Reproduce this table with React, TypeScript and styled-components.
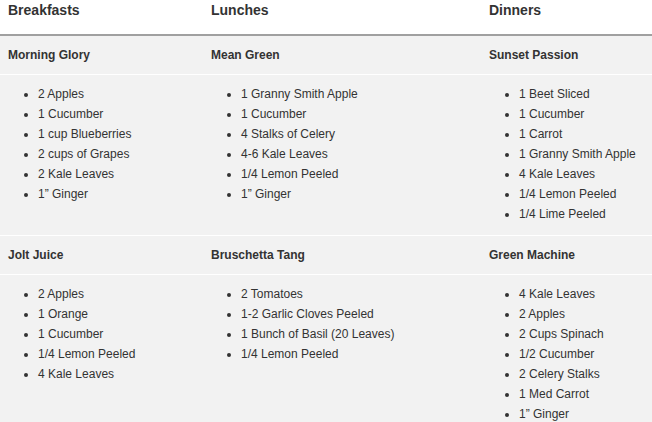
import React from "react";
import styled, { createGlobalStyle } from "styled-components";

const Global = createGlobalStyle`
  html, body { margin: 0; padding: 0; background: #ffffff; }
  body { font-family: "Liberation Sans", Arial, sans-serif; color: #333333; overflow: hidden; }
`;

const Table = styled.table`
  width: 652px;
  border-collapse: collapse;
  table-layout: fixed;
  font-family: "Liberation Sans", Arial, sans-serif;
`;

const HeadCell = styled.th`
  text-align: left;
  vertical-align: top;
  font-size: 14px;
  font-weight: bold;
  line-height: 20px;
  color: #333333;
  padding: 0 8px 14px;
  border-bottom: 2px solid #a0a0a0;
  background: #ffffff;
`;

const Row = styled.tr<{ $divider?: boolean }>`
  background: #f2f2f2;
  border-top: ${(p) => (p.$divider ? "1px solid #ffffff" : "none")};
`;

const NameCell = styled.td`
  font-size: 12px;
  font-weight: bold;
  line-height: 18px;
  color: #333333;
  padding: 10px 8px;
  vertical-align: top;
`;

const ListCell = styled.td`
  padding: 9px 8px 11px;
  vertical-align: top;
`;

const IngredientList = styled.ul`
  margin: 0;
  padding: 0 0 0 30px;
  list-style: disc;
`;

const Item = styled.li`
  font-size: 12px;
  line-height: 20px;
  color: #333333;
`;

type Recipe = { name: string; items: string[] };

const rows: Recipe[][] = [
  [
    { name: "Morning Glory", items: ["2 Apples", "1 Cucumber", "1 cup Blueberries", "2 cups of Grapes", "2 Kale Leaves", "1” Ginger"] },
    { name: "Mean Green", items: ["1 Granny Smith Apple", "1 Cucumber", "4 Stalks of Celery", "4-6 Kale Leaves", "1/4 Lemon Peeled", "1” Ginger"] },
    { name: "Sunset Passion", items: ["1 Beet Sliced", "1 Cucumber", "1 Carrot", "1 Granny Smith Apple", "4 Kale Leaves", "1/4 Lemon Peeled", "1/4 Lime Peeled"] },
  ],
  [
    { name: "Jolt Juice", items: ["2 Apples", "1 Orange", "1 Cucumber", "1/4 Lemon Peeled", "4 Kale Leaves"] },
    { name: "Bruschetta Tang", items: ["2 Tomatoes", "1-2 Garlic Cloves Peeled", "1 Bunch of Basil (20 Leaves)", "1/4 Lemon Peeled"] },
    { name: "Green Machine", items: ["4 Kale Leaves", "2 Apples", "2 Cups Spinach", "1/2 Cucumber", "2 Celery Stalks", "1 Med Carrot", "1” Ginger"] },
  ],
];

export default function App() {
  return (
    <>
      <Global />
      <Table>
        <colgroup>
          <col style={{ width: 203 }} />
          <col style={{ width: 278 }} />
          <col style={{ width: 171 }} />
        </colgroup>
        <thead>
          <tr>
            <HeadCell>Breakfasts</HeadCell>
            <HeadCell>Lunches</HeadCell>
            <HeadCell>Dinners</HeadCell>
          </tr>
        </thead>
        <tbody>
          {rows.map((group, gi) => (
            <React.Fragment key={gi}>
              <Row $divider={gi > 0}>
                {group.map((r) => (
                  <NameCell key={r.name}>{r.name}</NameCell>
                ))}
              </Row>
              <Row $divider>
                {group.map((r) => (
                  <ListCell key={r.name}>
                    <IngredientList>
                      {r.items.map((it) => (
                        <Item key={it}>{it}</Item>
                      ))}
                    </IngredientList>
                  </ListCell>
                ))}
              </Row>
            </React.Fragment>
          ))}
        </tbody>
      </Table>
    </>
  );
}
